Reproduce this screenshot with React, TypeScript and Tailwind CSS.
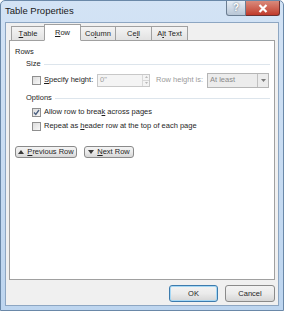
import React from "react";

function Check({ checked }: { checked?: boolean }) {
  return (
    <span className="w-[9px] h-[9px] border border-[#8f8f8f] bg-gradient-to-br from-[#dcdcdc] to-[#f8f8f8] flex items-center justify-center shrink-0">
      {checked && (
        <svg width="7" height="7" viewBox="0 0 7 7">
          <path d="M1 3.5 L2.8 5.5 L6 1" fill="none" stroke="#4a5f80" strokeWidth="1.3" />
        </svg>
      )}
    </span>
  );
}

function Btn({ children, primary, className = "" }: { children: React.ReactNode; primary?: boolean; className?: string }) {
  return (
    <div
      className={`flex items-center justify-center rounded-[3px] border whitespace-nowrap bg-gradient-to-b from-[#f3f3f3] via-[#ebebeb] to-[#d6d6d6] ${
        primary ? "border-[#3d7bad] shadow-[inset_0_0_0_1px_#a6d8f5]" : "border-[#8a8a8a]"
      } ${className}`}
    >
      {children}
    </div>
  );
}

export default function App() {
  const tabs = [
    { key: "table", node: <><span className="underline">T</span>able</>, w: "w-[34px]" },
    { key: "row", node: <><span className="underline">R</span>ow</>, w: "w-[37px]", active: true },
    { key: "col", node: <>Co<span className="underline">l</span>umn</>, w: "w-[36px]" },
    { key: "cell", node: <>Ce<span className="underline">l</span>l</>, w: "w-[37px]" },
    { key: "alt", node: <>A<span className="underline">l</span>t Text</>, w: "w-[37px]" },
  ];

  return (
    <div
      className="w-[284px] h-[311px] bg-gradient-to-b from-[#d3e3f5] to-[#bdd5ef] border border-[#6a88a8] rounded-t-[5px] flex flex-col text-[#1e1e1e] leading-[10px]"
      style={{ fontFamily: "'Liberation Sans', Arial, sans-serif" }}
    >
      {/* title bar */}
      <div className="h-[21px] flex items-start justify-between">
        <span className="ml-[4px] mt-[5px] text-[9.5px] text-[#202020] whitespace-nowrap">Table Properties</span>
        <div className="flex mr-[3px]">
          <div className="w-[20px] h-[15px] border border-[#6b7d92] border-t-0 rounded-bl-[3px] bg-gradient-to-b from-[#e6edf5] to-[#b8c6d6] flex items-center justify-center text-[10px] text-white font-bold [text-shadow:0_0_2px_#405060]">
            ?
          </div>
          <div className="w-[34px] h-[15px] border border-[#6b3030] border-t-0 border-l-0 rounded-br-[3px] bg-gradient-to-b from-[#d98a7c] to-[#c0392b] flex items-center justify-center">
            <svg width="10" height="9" viewBox="0 0 10 9">
              <path d="M1.5 1 L8.5 8 M8.5 1 L1.5 8" stroke="#fff" strokeWidth="2.2" />
            </svg>
          </div>
        </div>
      </div>

      {/* client */}
      <div className="flex-1 mx-[4px] mb-[4px] bg-[#f0f0f0] border border-[#8da6c2] flex flex-col text-[7.5px]">
        {/* tabs */}
        <div className="flex items-end h-[17px] pl-[5px]">
          {tabs.map((t) => (
            <div
              key={t.key}
              className={`${t.w} flex items-center justify-center whitespace-nowrap border border-[#a0a0a0] -mr-px ${
                t.active
                  ? "h-[17px] bg-white border-b-white relative z-10 -mb-px"
                  : "h-[14px] bg-gradient-to-b from-[#f4f4f4] to-[#e2e2e2] border-b-0"
              }`}
            >
              {t.node}
            </div>
          ))}
        </div>

        {/* panel */}
        <div className="mx-[3px] h-[240px] bg-white border border-[#a0a0a0] pt-[6px] pl-[5px] pr-[4px] whitespace-nowrap">
          <div className="h-[10px]">Rows</div>
          <div className="flex items-center gap-[3px] ml-[11px] mt-[2px] h-[10px]">
            <span>Size</span>
            <div className="flex-1 h-px bg-[#dde5ec]" />
          </div>
          <div className="flex items-center ml-[17px] mt-[4px] h-[14px]">
            <Check />
            <span className="ml-[3px] w-[53px]">
              <span className="underline">S</span>pecify height:
            </span>
            <div className="w-[53px] h-[13px] border border-[#c8c8c8] bg-[#f4f4f4] flex items-center justify-between">
              <span className="ml-[2px] text-[#a0a0a0]">0"</span>
              <div className="w-[7px] h-full flex flex-col border-l border-[#d8d8d8]">
                <div className="flex-1 border-b border-[#d8d8d8] flex items-center justify-center">
                  <svg width="3" height="2" viewBox="0 0 3 2"><path d="M0 2 L3 2 L1.5 0 Z" fill="#b8b8b8" /></svg>
                </div>
                <div className="flex-1 flex items-center justify-center">
                  <svg width="3" height="2" viewBox="0 0 3 2"><path d="M0 0 L3 0 L1.5 2 Z" fill="#b8b8b8" /></svg>
                </div>
              </div>
            </div>
            <span className="ml-[6px] w-[51px] text-[#9a9a9a]">Row height is:</span>
            <div className="w-[62px] h-[15px] border border-[#b5b5b5] bg-[#ececec] flex items-center justify-between">
              <span className="ml-[2px] text-[#8a8a8a]">At least</span>
              <div className="w-[11px] h-full border-l border-[#c0c0c0] flex items-center justify-center">
                <svg width="5" height="3" viewBox="0 0 5 3">
                  <path d="M0 0 L5 0 L2.5 3 Z" fill="#7a7a7a" />
                </svg>
              </div>
            </div>
          </div>
          <div className="flex items-center gap-[3px] ml-[11px] mt-[6px] h-[10px]">
            <span>Options</span>
            <div className="flex-1 h-px bg-[#dde5ec]" />
          </div>
          <div className="flex items-center ml-[17px] mt-[4px] h-[10px]">
            <Check checked />
            <span className="ml-[3px]">
              Allow row to brea<span className="underline">k</span> across pages
            </span>
          </div>
          <div className="flex items-center ml-[17px] mt-[4px] h-[10px]">
            <Check />
            <span className="ml-[3px]">
              Repeat as <span className="underline">h</span>eader row at the top of each page
            </span>
          </div>
          <div className="flex gap-[7px] mt-[15px]">
            <Btn className="w-[62px] h-[12px]">
              <svg width="6" height="4" viewBox="0 0 6 4" className="mr-[3px]">
                <path d="M0 4 L6 4 L3 0 Z" fill="#3a3a3a" />
              </svg>
              <span>
                <span className="underline">P</span>revious Row
              </span>
            </Btn>
            <Btn className="w-[50px] h-[12px]">
              <svg width="6" height="4" viewBox="0 0 6 4" className="mr-[3px]">
                <path d="M0 0 L6 0 L3 4 Z" fill="#3a3a3a" />
              </svg>
              <span>
                <span className="underline">N</span>ext Row
              </span>
            </Btn>
          </div>
        </div>

        {/* footer */}
        <div className="flex justify-end gap-[7px] mt-[5px] mr-[3px]">
          <Btn primary className="w-[49px] h-[17px]">
            OK
          </Btn>
          <Btn className="w-[50px] h-[17px]">Cancel</Btn>
        </div>
      </div>
    </div>
  );
}
